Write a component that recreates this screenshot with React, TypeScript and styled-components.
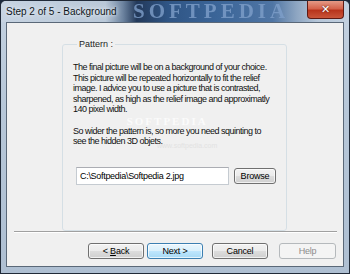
import React from "react";
import styled, { createGlobalStyle } from "styled-components";

const GlobalStyle = createGlobalStyle`
  html, body {
    margin: 0;
    padding: 0;
    background: #1c2a3c;
  }
  * {
    box-sizing: border-box;
  }
`;

const Window = styled.div`
  width: 350px;
  height: 274px;
  display: flex;
  flex-direction: column;
  border: 1px solid #202a38;
  border-radius: 6px 6px 0 0;
  background: linear-gradient(180deg, #c4d2e1 0%, #b7c7d8 40%, #aebfd2 100%);
  overflow: hidden;
`;

const TitleBar = styled.div`
  position: relative;
  height: 21px;
  display: flex;
  align-items: center;
  padding-left: 5px;
  background: linear-gradient(
    90deg,
    #c6d3e1 0%,
    #b9c8d8 30%,
    #6d84a0 35%,
    #23395a 39%,
    #2f5585 48%,
    #3b6598 62%,
    #4f75a4 78%,
    #8ea6c2 85%,
    #b6c6d8 91%,
    #c2d0df 100%
  );
`;

const Title = styled.span`
  position: relative;
  z-index: 1;
  font-family: "Liberation Sans", Arial, sans-serif;
  font-size: 10px;
  color: #0e1620;
  text-shadow: 0 0 6px #e8eef5, 0 0 3px #e8eef5;
`;

const Watermark = styled.span`
  position: absolute;
  left: 132px;
  top: 0px;
  font-family: "Liberation Serif", serif;
  font-weight: bold;
  font-size: 21px;
  line-height: 21px;
  letter-spacing: 4px;
  color: #7f9fca;
  opacity: 0.8;
  filter: blur(0.5px);
`;

const CloseButton = styled.div`
  position: relative;
  z-index: 1;
  margin-left: auto;
  margin-right: 5px;
  align-self: flex-start;
  width: 37px;
  height: 18px;
  border: 1px solid #5e1a14;
  border-top: none;
  border-radius: 0 0 4px 4px;
  background: linear-gradient(180deg, #e49a86 0%, #d4634b 45%, #b8341c 55%, #c9553a 100%);
  display: flex;
  align-items: center;
  justify-content: center;
  color: #fff;
  font-family: "DejaVu Sans", sans-serif;
  font-weight: bold;
  font-size: 11px;
  text-shadow: 0 0 2px #40100a;
`;

const Client = styled.div`
  flex: 1;
  margin: 0 5px 6px 5px;
  border: 1px solid #5a6878;
  background: #f0f0f0;
  display: flex;
  flex-direction: column;
  font-family: "Liberation Sans", Arial, sans-serif;
  font-size: 9px;
  color: #000;
`;

const Body = styled.div`
  flex: 1;
  padding: 16px 0 0 55px;
`;

const GroupBox = styled.fieldset`
  position: relative;
  margin: 0;
  width: 225px;
  height: 192px;
  border: 1px solid #d5dfe5;
  border-radius: 3px;
  padding: 13px 8px 0 10px;
`;

const Legend = styled.legend`
  padding: 0 2px;
  margin-left: 4px;
  font-size: 9px;
  color: #1e1e1e;
`;

const Paragraph = styled.p`
  position: relative;
  z-index: 1;
  margin: 0 0 11px 0;
  line-height: 10.5px;
  letter-spacing: -0.5px;
  white-space: nowrap;
  color: #101010;
`;

const BodyWatermark = styled.div`
  position: absolute;
  z-index: 0;
  left: 54px;
  top: 67px;
  display: flex;
  flex-direction: column;
  align-items: center;
  color: #fbfbfb;
  font-family: "Liberation Serif", serif;
  font-size: 11px;
  font-weight: bold;
  letter-spacing: 2px;
  line-height: 11px;
  pointer-events: none;

  small {
    font-family: "Liberation Sans", sans-serif;
    font-weight: normal;
    font-size: 7px;
    letter-spacing: 0;
    color: #e2e2e2;
    margin-top: 13px;
    margin-left: 40px;
  }
`;

const FileRow = styled.div`
  display: flex;
  align-items: center;
  gap: 5px;
  margin-top: 20px;
  padding-left: 3px;
`;

const TextInput = styled.div`
  width: 153px;
  height: 18px;
  border: 1px solid #c5cbd1;
  border-top-color: #abadb3;
  background: #fff;
  padding: 0 3px;
  display: flex;
  align-items: center;
  letter-spacing: -0.3px;
`;

const Separator = styled.div`
  height: 2px;
  margin: 0 6px 0 7px;
  border-top: 1px solid #a0a0a0;
  border-bottom: 1px solid #ffffff;
`;

const ButtonRow = styled.div`
  display: flex;
  justify-content: flex-end;
  gap: 3px;
  padding: 10px 7px 7px 0;
`;

const Button = styled.div<{ $variant?: "default" | "disabled"; $gapLeft?: number }>`
  width: ${(p) => (p.$variant === "disabled" ? 57 : 56)}px;
  height: 16px;
  margin-left: ${(p) => p.$gapLeft ?? 0}px;
  border-radius: 3px;
  display: flex;
  align-items: center;
  justify-content: center;
  font-size: 9px;
  letter-spacing: -0.2px;
  border: 1px solid
    ${(p) =>
      p.$variant === "default" ? "#3c7fb1" : p.$variant === "disabled" ? "#b5b9bc" : "#707070"};
  color: ${(p) => (p.$variant === "disabled" ? "#8c8c8c" : "#000")};
  background: ${(p) =>
    p.$variant === "default"
      ? "linear-gradient(180deg, #eaf6fd 0%, #d9f0fc 50%, #bee6fd 51%, #a7d9f5 100%)"
      : p.$variant === "disabled"
      ? "#f4f4f4"
      : "linear-gradient(180deg, #f2f2f2 0%, #ebebeb 50%, #dddddd 51%, #cfcfcf 100%)"};
  box-shadow: inset 0 0 0 1px
    ${(p) => (p.$variant === "disabled" ? "transparent" : "rgba(255,255,255,0.7)")};
`;

const SmallButton = styled(Button)`
  width: 42px;
`;

export default function App() {
  return (
    <>
      <GlobalStyle />
      <Window>
        <TitleBar>
          <Watermark>SOFTPEDIA</Watermark>
          <Title>Step 2 of 5 - Background</Title>
          <CloseButton>✕</CloseButton>
        </TitleBar>
        <Client>
          <Body>
            <GroupBox>
              <Legend>Pattern :</Legend>
              <BodyWatermark>
                SOFTPEDIA
                <small>www.softpedia.com</small>
              </BodyWatermark>
              <Paragraph>
                The final picture will be on a background of your choice.
                <br />
                This picture will be repeated horizontally to fit the relief
                <br />
                image. I advice you to use a picture that is contrasted,
                <br />
                sharpened, as high as the relief image and approximatly
                <br />
                140 pixel width.
              </Paragraph>
              <Paragraph>
                So wider the pattern is, so more you need squinting to
                <br />
                see the hidden 3D objets.
              </Paragraph>
              <FileRow>
                <TextInput>C:\Softpedia\Softpedia 2.jpg</TextInput>
                <SmallButton>Browse</SmallButton>
              </FileRow>
            </GroupBox>
          </Body>
          <Separator />
          <ButtonRow>
            <Button>
              &lt;&nbsp;<u>B</u>ack
            </Button>
            <Button $variant="default">Next &gt;</Button>
            <Button $gapLeft={6}>Cancel</Button>
            <Button $variant="disabled" $gapLeft={8}>
              Help
            </Button>
          </ButtonRow>
        </Client>
      </Window>
    </>
  );
}
